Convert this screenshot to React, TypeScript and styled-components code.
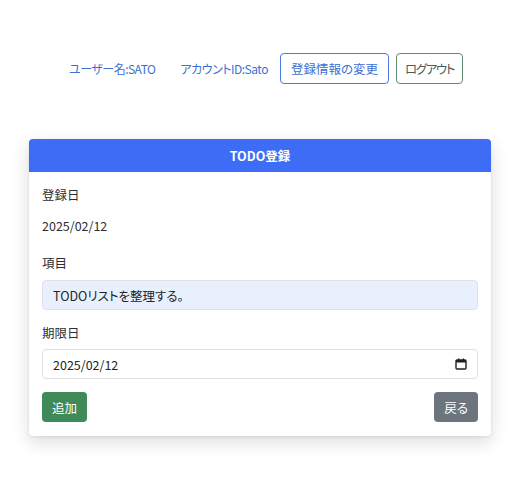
import React from "react";
import styled, { createGlobalStyle } from "styled-components";

const Global = createGlobalStyle`
  html, body { margin: 0; padding: 0; background: #ffffff; }
  body {
    font-family: "Noto Sans CJK JP", "Noto Sans", sans-serif;
    font-feature-settings: "palt";
    color: #2b2f33;
  }
  * { box-sizing: border-box; }
`;

const Page = styled.div`
  width: 520px;
  min-height: 487px;
  padding-top: 53px;
`;

const TopBar = styled.nav`
  display: flex;
  align-items: center;
  padding-left: 69px;
  height: 31px;
  white-space: nowrap;
`;

const InfoText = styled.span<{ $gap: number }>`
  flex-shrink: 0;
  font-size: 12px;
  letter-spacing: -0.5px;
  color: #3b6fd6;
  margin-right: ${(p) => p.$gap}px;
`;

const OutlineButton = styled.button<{ $tone: "blue" | "gray" }>`
  flex-shrink: 0;
  white-space: nowrap;
  height: 31px;
  padding: 0 ${(p) => (p.$tone === "gray" ? 8 : 10)}px;
  font-family: inherit;
  font-feature-settings: "palt";
  font-size: 12.5px;
  letter-spacing: ${(p) => (p.$tone === "gray" ? "-1.4px" : "0")};
  background: #fff;
  border-radius: 4px;
  border: 1px solid ${(p) => (p.$tone === "blue" ? "#4a7be2" : "#5f8a74")};
  color: ${(p) => (p.$tone === "blue" ? "#3b6fd6" : "#4d5a55")};
  margin-right: 7px;
  cursor: pointer;
`;

const Card = styled.section`
  margin: 55px 0 0 29px;
  width: 462px;
  background: #fff;
  border-radius: 4px;
  box-shadow: 0 6px 18px rgba(0, 0, 0, 0.14), 0 1px 3px rgba(0, 0, 0, 0.08);
  overflow: hidden;
`;

const CardHeader = styled.header`
  height: 33px;
  background: #3d6cf7;
  color: #fff;
  font-weight: 700;
  font-size: 12.5px;
  display: flex;
  align-items: center;
  justify-content: center;
`;

const CardBody = styled.div`
  padding: 14px 13px 14px 13px;
  display: flex;
  flex-direction: column;
`;

const Label = styled.div<{ $after: number }>`
  font-size: 12.5px;
  height: 18px;
  line-height: 18px;
  margin-bottom: ${(p) => p.$after}px;
`;

const TextInput = styled.input<{ $filled?: boolean }>`
  width: 100%;
  height: 30px;
  border: 1px solid #dee2e6;
  border-radius: 4px;
  padding: 0 10px;
  font-family: inherit;
  font-feature-settings: "palt";
  font-size: 12.5px;
  color: #212529;
  background: ${(p) => (p.$filled ? "#e8f0fe" : "#fff")};
  margin-bottom: 14px;
  outline: none;
`;

const DateBox = styled.div`
  width: 100%;
  height: 30px;
  border: 1px solid #dee2e6;
  border-radius: 4px;
  padding: 0 10px;
  font-size: 12.5px;
  color: #212529;
  display: flex;
  align-items: center;
  justify-content: space-between;
  margin-bottom: 13px;
`;

const Actions = styled.div`
  display: flex;
  justify-content: space-between;
`;

const SolidButton = styled.button<{ $color: string }>`
  height: 30px;
  padding: 0 10px;
  border: none;
  border-radius: 4px;
  background: ${(p) => p.$color};
  color: #fff;
  font-family: inherit;
  font-feature-settings: "palt";
  font-size: 12.5px;
  cursor: pointer;
`;

const CalendarIcon = () => (
  <svg width="12" height="12" viewBox="0 0 12 12">
    <rect x="1" y="2" width="10" height="9" rx="1" fill="none" stroke="#222" strokeWidth="1.4" />
    <rect x="1" y="2" width="10" height="2.5" fill="#222" />
    <rect x="3" y="0.5" width="1.4" height="2" fill="#222" />
    <rect x="7.6" y="0.5" width="1.4" height="2" fill="#222" />
  </svg>
);

export default function App() {
  return (
    <>
      <Global />
      <Page>
        <TopBar>
          <InfoText $gap={25}>ユーザー名:SATO</InfoText>
          <InfoText $gap={12}>アカウントID:Sato</InfoText>
          <OutlineButton $tone="blue">登録情報の変更</OutlineButton>
          <OutlineButton $tone="gray">ログアウト</OutlineButton>
        </TopBar>
        <Card>
          <CardHeader>TODO登録</CardHeader>
          <CardBody>
            <Label $after={13}>登録日</Label>
            <Label $after={19}>2025/02/12</Label>
            <Label $after={8}>項目</Label>
            <TextInput $filled defaultValue="TODOリストを整理する。" />
            <Label $after={7}>期限日</Label>
            <DateBox>
              <span>2025/02/12</span>
              <CalendarIcon />
            </DateBox>
            <Actions>
              <SolidButton $color="#3e8a58">追加</SolidButton>
              <SolidButton $color="#6c757d">戻る</SolidButton>
            </Actions>
          </CardBody>
        </Card>
      </Page>
    </>
  );
}
